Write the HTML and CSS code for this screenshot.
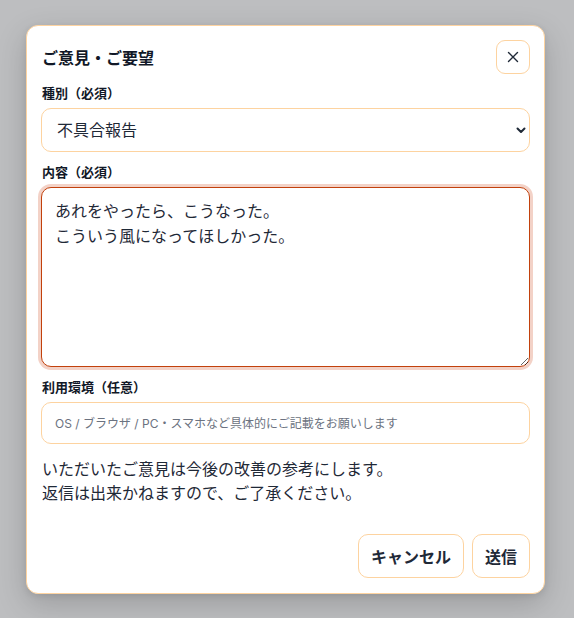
FILE: index.html
```html
<!DOCTYPE html>
<html lang="ja">
<head>
<meta charset="utf-8">
<title>ご意見・ご要望</title>
<link rel="stylesheet" href="styles.css">
</head>
<body>
<div class="modal">
  <div class="header">
    <h2 class="title">ご意見・ご要望</h2>
    <button class="close" aria-label="閉じる">
      <svg width="12" height="12" viewBox="0 0 12 12"><path d="M1.5 1.5L10.5 10.5M10.5 1.5L1.5 10.5" stroke="#1f2937" stroke-width="1.4" stroke-linecap="round"/></svg>
    </button>
  </div>
  <div class="field first">
    <label class="label">種別（必須）</label>
    <div class="select-wrap">
      <select class="select">
        <option>不具合報告</option>
        <option>機能要望</option>
        <option>その他</option>
      </select>
      <svg class="chev" width="10" height="7" viewBox="0 0 10 7"><path d="M1.5 1.5L5 5L8.5 1.5" fill="none" stroke="#1f2937" stroke-width="2" stroke-linecap="round" stroke-linejoin="round"/></svg>
    </div>
  </div>
  <div class="field">
    <label class="label">内容（必須）</label>
    <textarea id="content" class="textarea" autofocus>あれをやったら、こうなった。
こういう風になってほしかった。</textarea>
  </div>
  <div class="field">
    <label class="label">利用環境（任意）</label>
    <input class="input" type="text" placeholder="OS / ブラウザ / PC・スマホなど具体的にご記載をお願いします">
  </div>
  <p class="note">いただいたご意見は今後の改善の参考にします。<br>返信は出来かねますので、ご了承ください。</p>
  <div class="actions">
    <button class="btn">キャンセル</button>
    <button class="btn">送信</button>
  </div>
</div>
<script src="script.js"></script>
</body>
</html>
```
FILE: styles.css
```css
* { box-sizing: border-box; }
html, body { height: 100%; }
body {
  margin: 0;
  background: #bdbec0;
  font-family: "Inter", "Noto Sans CJK JP", sans-serif;
  color: #1f2937;
  padding: 25px 29px 26px 26px;
}
.modal {
  background: #fff;
  border: 1px solid #fdd3a0;
  border-radius: 12px;
  box-shadow: 0 10px 30px rgba(0,0,0,0.18), 0 2px 6px rgba(0,0,0,0.08);
  padding: 14px 14px 15px 14px;
  display: flex;
  flex-direction: column;
}
.header {
  display: flex;
  align-items: center;
  justify-content: space-between;
}
.title {
  margin: 0 0 0 1px;
  font-size: 16px;
  font-weight: 700;
  color: #111827;
}
.close {
  width: 34px;
  height: 34px;
  border: 1px solid #fdd3a0;
  border-radius: 9px;
  background: #fff;
  display: flex;
  align-items: center;
  justify-content: center;
  padding: 0;
}
.field {
  display: flex;
  flex-direction: column;
  gap: 6px;
  margin-top: 11px;
}
.field.first { margin-top: 10px; }
.label {
  font-size: 13px;
  font-weight: 700;
  line-height: 18px;
  color: #111827;
  padding-left: 1px;
}
.select-wrap { position: relative; }
.select {
  appearance: none;
  -webkit-appearance: none;
  width: 100%;
  height: 44px;
  border: 1px solid #fdd3a0;
  border-radius: 10px;
  background: #fff;
  padding: 0 15px;
  font-family: inherit;
  font-size: 16px;
  color: #1f2937;
}
.chev {
  position: absolute;
  right: 4px;
  top: 19px;
}
.textarea {
  width: 100%;
  height: 180px;
  border: 1.5px solid #c2410c;
  border-radius: 10px;
  box-shadow: 0 0 0 3px #f3d2c7;
  padding: 11px 13px;
  font-family: inherit;
  font-size: 16px;
  line-height: 25px;
  color: #1f2937;
  resize: vertical;
  outline: none;
  caret-color: #111827;
}
.input {
  width: 100%;
  height: 42px;
  border: 1px solid #fdd3a0;
  border-radius: 10px;
  padding: 0 13px;
  font-family: inherit;
  font-size: 12px;
  color: #1f2937;
  outline: none;
}
.input::placeholder { color: #6b7280; }
.note {
  margin: 13px 0 0 1px;
  font-size: 16px;
  line-height: 24px;
  color: #1f2937;
}
.actions {
  display: flex;
  justify-content: flex-end;
  gap: 8px;
  margin-top: 29px;
}
.btn {
  height: 44px;
  padding: 0 12px;
  border: 1px solid #fdd3a0;
  border-radius: 10px;
  background: #fff;
  font-family: inherit;
  font-size: 16px;
  font-weight: 700;
  color: #1f2937;
}
```
FILE: script.js
```js
var ta = document.getElementById('content');
var pos = ta.value.indexOf('なってほしかった');
ta.focus();
ta.setSelectionRange(pos, pos);
```
